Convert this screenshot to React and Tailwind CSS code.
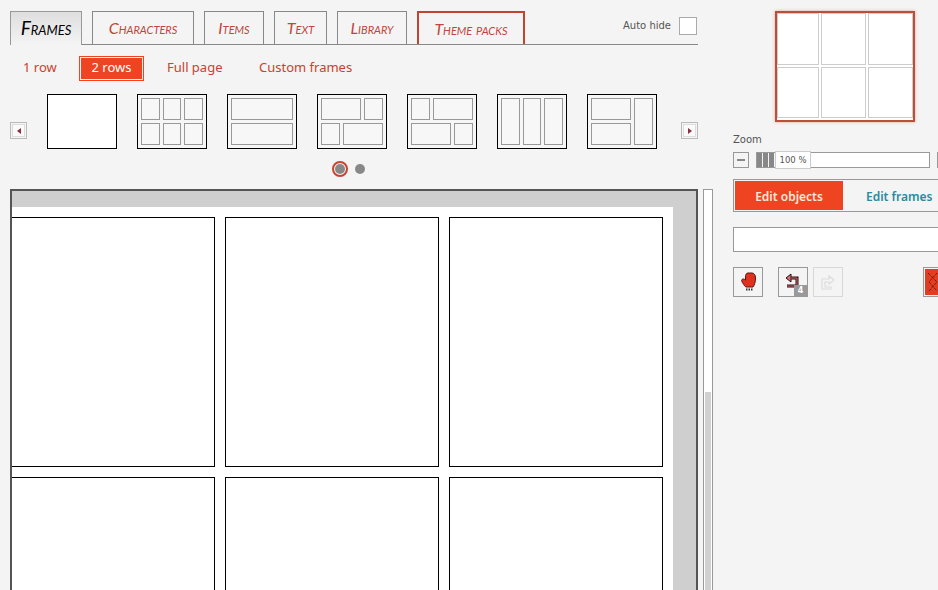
const tabs = ['Characters', 'Items', 'Text', 'Library'];
const tabWidths = { Characters: 'w-[102px]', Items: 'w-[60px]', Text: 'w-[53px]', Library: 'w-[70px]' };

// each layout is a list of [col, row, colSpan, rowSpan] on a 6x2 grid
const layouts = [
    [],
    [[1, 1, 2, 1], [3, 1, 2, 1], [5, 1, 2, 1], [1, 2, 2, 1], [3, 2, 2, 1], [5, 2, 2, 1]],
    [[1, 1, 6, 1], [1, 2, 6, 1]],
    [[1, 1, 4, 1], [5, 1, 2, 1], [1, 2, 2, 1], [3, 2, 4, 1]],
    [[1, 1, 2, 1], [3, 1, 4, 1], [1, 2, 4, 1], [5, 2, 2, 1]],
    [[1, 1, 2, 2], [3, 1, 2, 2], [5, 1, 2, 2]],
    [[1, 1, 4, 1], [1, 2, 4, 1], [5, 1, 2, 2]],
];

const comic = { fontFamily: '"Lato", sans-serif' };
const noto = { fontFamily: '"Noto Sans", sans-serif' };

const Thumb = ({ cells }) => (
    <div className="w-[70px] h-[55px] border border-black bg-[#f6f6f6] first:bg-white grid grid-cols-6 grid-rows-2 gap-[3px] p-[3px]">
        {cells.map((c, i) => (
            <div
                key={i}
                className="border border-[#999] bg-[#f7f7f7]"
                style={{ gridColumn: `${c[0]} / span ${c[2]}`, gridRow: `${c[1]} / span ${c[3]}` }}
            />
        ))}
    </div>
);

const Arrow = ({ right }) => (
    <div className="w-[17px] h-[17px] border border-[#bbb] bg-[#f4f4f4] p-px">
        <div className="w-full h-full border border-[#ddd] bg-[#fafafa] flex items-center justify-center">
            <svg width="4" height="6" viewBox="0 0 4 6">
                <path d={right ? 'M0 0 L4 3 L0 6 Z' : 'M4 0 L0 3 L4 6 Z'} fill="#8a3040" />
            </svg>
        </div>
    </div>
);

const Mitten = () => (
    <svg width="15" height="20" viewBox="0 0 15 20">
        <path
            d="M7 1 C5 1 4.5 3 4.5 5 V8 C3.5 7 2 6.5 1 7.5 C0.2 8.5 1 10 2 11.5 C3 13 4 14.5 5 15 H12 C13.5 13 14.5 10 14.5 6 C14.5 3 13 1 11 1 Z"
            fill="#e0301e"
            stroke="#5a1410"
            strokeWidth="1"
        />
        <path d="M5 17.5 H12.5" stroke="#333" strokeWidth="2" strokeDasharray="1.5 1" />
    </svg>
);

const UndoIcon = () => (
    <svg width="14" height="16" viewBox="0 0 14 16" fill="none">
        <path d="M1 5 L6 1 V9 Z" fill="#d9707a" stroke="#2a0c0c" strokeWidth="1" />
        <path d="M6 5 H12 V13 H2" stroke="#2a0c0c" strokeWidth="3" />
        <path d="M6 5 H12 V13 H2" stroke="#d9707a" strokeWidth="1" />
    </svg>
);

const RedoIcon = () => (
    <svg width="14" height="15" viewBox="0 0 14 15" fill="none">
        <path d="M8 1 L13 5 L8 9 V7 H4 V12 H10 V14 H1 V4 H8 Z" fill="#f4f4f4" stroke="#dcdcdc" strokeWidth="1.2" />
    </svg>
);

const App = () => {
    return (
        <div className="w-[938px] h-[590px] overflow-hidden bg-[#f4f4f4] flex" style={{ fontFamily: '"DejaVu Sans", sans-serif' }}>
            {/* Left column */}
            <div className="w-[698px] shrink-0 pl-[10px] pt-[11px] flex flex-col">
                <div className="h-[34px] shrink-0 flex items-stretch gap-[10px] border-b border-[#888]">
                    <div
                        className="w-[72px] -mb-px border border-b-0 border-[#999] bg-gradient-to-b from-[#dedede] to-[#f4f4f4] flex items-center justify-center text-[19px] text-black italic [font-variant:small-caps]"
                        style={comic}
                    >
                        Frames
                    </div>
                    {tabs.map((t) => (
                        <div
                            key={t}
                            className={`${tabWidths[t]} border border-b-0 border-[#888] flex items-center justify-center text-[16px] text-[#c0453a] italic [font-variant:small-caps]`}
                            style={comic}
                        >
                            {t}
                        </div>
                    ))}
                    <div
                        className="w-[108px] border-2 border-b-0 border-[#c0442f] flex items-center justify-center text-[16px] text-[#c0453a] italic [font-variant:small-caps]"
                        style={comic}
                    >
                        Theme packs
                    </div>
                    <div className="ml-auto flex items-start gap-[8px] pt-[6px] pr-px">
                        <span className="text-[10px] leading-[17px] text-[#555]">Auto hide</span>
                        <div className="w-[18px] h-[18px] border border-[#aaa] bg-white" />
                    </div>
                </div>

                <div className="h-[24px] mt-[11px] shrink-0 flex items-center text-[13px] text-[#c8422c]" style={noto}>
                    <span className="ml-[13px] w-[56px]">1 row</span>
                    <span className="w-[65px] h-[25px] border border-[#ee4422] p-px">
                        <span className="w-full h-full bg-[#ee4422] text-white flex items-center justify-center">2 rows</span>
                    </span>
                    <span className="ml-[23px] w-[92px]">Full page</span>
                    <span>Custom frames</span>
                </div>

                <div className="mt-[14px] h-[55px] shrink-0 flex items-start">
                    <div className="mt-[28px]"><Arrow /></div>
                    <div className="ml-[20px] flex gap-[20px]">
                        {layouts.map((cells, i) => (
                            <Thumb key={i} cells={cells} />
                        ))}
                    </div>
                    <div className="ml-[24px] mt-[28px]"><Arrow right /></div>
                </div>

                <div className="mt-[12px] ml-[322px] h-[16px] shrink-0 flex items-center gap-[7px]">
                    <div className="w-[16px] h-[16px] rounded-full border-2 border-[#c8442c] p-[1px]">
                        <div className="w-full h-full rounded-full bg-[#888]" />
                    </div>
                    <div className="w-[10px] h-[10px] rounded-full bg-[#888]" />
                </div>

                {/* Canvas */}
                <div className="mt-[12px] flex-1 min-h-0 border-2 border-b-0 border-[#555] bg-[#cfcfcf] overflow-hidden pt-[16px] pr-[23px]">
                    <div className="bg-white h-full pt-[10px] pr-[10px]">
                        <div className="grid grid-cols-[203px_214px_214px] grid-rows-[250px_250px] gap-[10px]">
                            {[0, 1, 2, 3, 4, 5].map((i) => (
                                <div key={i} className={`border border-black bg-white ${i % 3 === 0 ? 'border-l-0' : ''}`} />
                            ))}
                        </div>
                    </div>
                </div>
            </div>

            {/* Scrollbar */}
            <div className="w-[10px] shrink-0 ml-[5px] mt-[189px] border-x border-t border-[#999] bg-white flex flex-col">
                <div className="h-[202px] shrink-0" />
                <div className="flex-1 mx-px bg-[#d0d0d0]" />
            </div>

            {/* Right panel */}
            <div className="flex-1 min-w-0 pl-[20px] overflow-hidden">
                <div className="ml-[42px] mt-[11px] w-[140px] h-[111px] border-2 border-[#b9503c] shadow-[0_0_3px_#f0a090] bg-white grid grid-cols-[42px_45px_1fr] grid-rows-2 gap-[2px] pb-[2px]">
                    {[0, 1, 2, 3, 4, 5].map((i) => (
                        <div key={i} className="border border-[#ccc] bg-white" />
                    ))}
                </div>

                <div className="mt-[11px] text-[10px] leading-[13px] text-[#555]">Zoom</div>

                <div className="mt-[6px] w-[210px] h-[16px] flex items-center">
                    <div className="w-[16px] h-[16px] shrink-0 border border-[#999] flex items-center justify-center">
                        <div className="w-[8px] h-[2px] bg-[#888]" />
                    </div>
                    <div className="ml-[7px] w-[174px] h-[16px] shrink-0 border border-[#999] bg-white flex items-center relative">
                        <div className="w-[18px] h-full bg-[repeating-linear-gradient(90deg,#888_0,#888_5px,#f4f4f4_5px,#f4f4f4_6px)]" />
                        <div className="absolute left-[18px] -top-[2px] w-[36px] h-[18px] border border-[#ccc] bg-white text-[8.5px] text-[#555] flex items-center justify-center">
                            100 %
                        </div>
                    </div>
                    <div className="ml-[7px] w-[16px] h-[16px] shrink-0 border border-[#999]" />
                </div>

                <div className="mt-[11px] w-[240px] h-[33px] border border-[#999] p-px flex text-[12px] font-semibold" style={noto}>
                    <div className="w-[108px] pt-[2px] bg-[#ee4422] text-[#ffe9dc] flex items-center justify-center">
                        Edit objects
                    </div>
                    <div className="ml-[23px] pt-[2px] text-[#2a8aa0] flex items-center">Edit frames</div>
                </div>

                <div className="mt-[15px] w-[240px] h-[25px] border border-[#999] bg-white" />

                <div className="mt-[15px] w-[240px] h-[31px] flex">
                    <div className="w-[30px] h-[30px] border border-[#999] flex items-center justify-center">
                        <Mitten />
                    </div>
                    <div className="ml-[15px] w-[30px] h-[30px] border border-[#999] flex items-center justify-center relative pr-[2px] pb-[2px]">
                        <UndoIcon />
                        <div className="absolute right-0 bottom-0 w-[13px] h-[11px] bg-[#999] text-white text-[8px] font-bold leading-[11px] text-center">4</div>
                    </div>
                    <div className="ml-[5px] w-[30px] h-[30px] border border-[#d8d8d8] flex items-center justify-center">
                        <RedoIcon />
                    </div>
                    <div className="ml-[80px] w-[30px] h-[30px] border border-[#999] p-px">
                        <div className="w-full h-full bg-[#e23d20] flex items-center">
                            <svg width="16" height="24" viewBox="0 0 16 24" fill="none">
                                <path d="M3 3 L12 12 L4 21 M12 3 L4 12 L12 21" stroke="#3a0d08" strokeWidth="1" strokeDasharray="1 1" />
                            </svg>
                        </div>
                    </div>
                </div>
            </div>
        </div>
    );
};

export default App;
